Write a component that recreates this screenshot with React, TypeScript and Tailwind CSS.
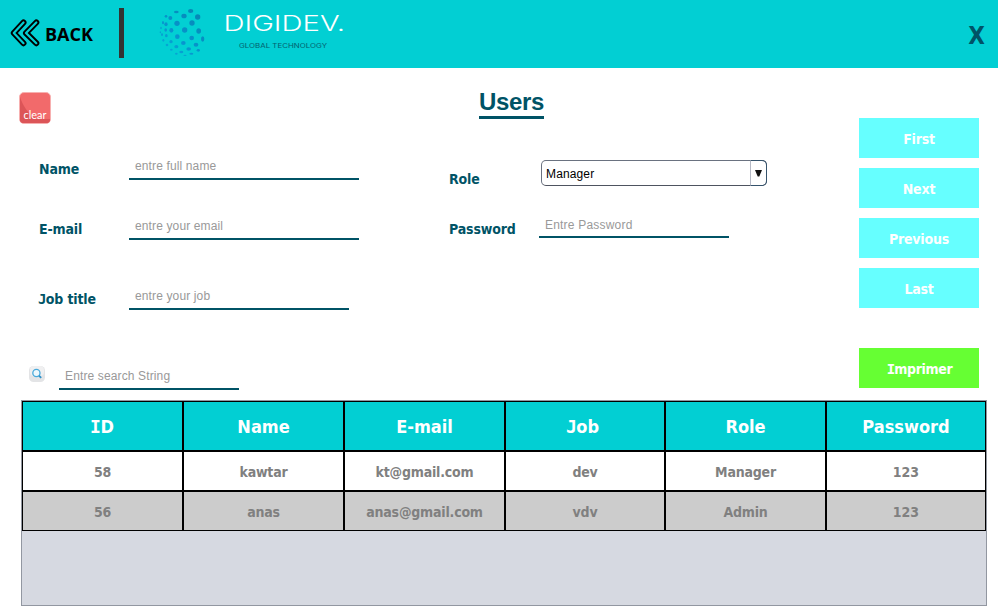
import React from "react";

const label = "font-['DejaVu_Sans_Condensed','DejaVu_Sans',sans-serif] font-bold text-[14px] leading-[20px] tracking-[-0.15px] text-[#005366] whitespace-nowrap";

const dots: number[][] = [
  [79, 36, 7, 4], [122, 33, 8, 6], [102, 48, 8, 7], [143, 51, 8, 8], [48, 49, 4, 4],
  [61, 54, 6, 6], [81, 70, 8, 8], [126, 69, 8, 8], [104, 90, 8, 8], [146, 93, 7, 8],
  [64, 91, 6, 7], [82, 110, 7, 7], [125, 114, 7, 7], [100, 129, 7, 6], [158, 117, 5, 8], [138, 134, 7, 6],
  [48, 73, 5, 6], [39, 68, 3, 5], [47, 90, 4, 5], [49, 107, 4, 5], [63, 125, 5, 5], [79, 140, 6, 5], [116, 147, 7, 5],
  [33, 84, 2, 4], [36, 104, 3, 4], [40, 121, 3, 4], [51, 135, 4, 4], [64, 149, 4, 3], [94, 156, 6, 4],
  [145, 151, 5, 4], [124, 161, 6, 3], [79, 161, 4, 3], [105, 166, 5, 2], [31, 97, 2, 3],
];

function Globe() {
  return (
    <svg className="shrink-0" width="50" height="60" viewBox="24 0 150 180">
      <defs>
        <linearGradient id="globe" gradientUnits="userSpaceOnUse" x1="40" y1="160" x2="150" y2="40">
          <stop offset="0" stopColor="#05b0d6" />
          <stop offset="0.4" stopColor="#0795cf" />
          <stop offset="1" stopColor="#0688b4" />
        </linearGradient>
      </defs>
      {dots.map(([x, y, rx, ry], i) => (
        <ellipse key={i} cx={x} cy={y} rx={rx} ry={ry} fill="url(#globe)" />
      ))}
    </svg>
  );
}

function Header() {
  return (
    <header className="flex h-[68px] bg-[#02cfd3]">
      <svg className="ml-[10px] mt-[18px] shrink-0" width="31" height="30" viewBox="0 0 31 30" fill="none" strokeLinejoin="round" strokeLinecap="round">
        <g stroke="#000" strokeWidth="6">
          <path d="M13.5 4.5 3.8 15l9.7 10.2" />
          <path d="M26.3 4.5 16 15l10.3 10.2" />
        </g>
        <g stroke="#02cfd3" strokeWidth="2.2">
          <path d="M13.5 4.5 3.8 15l9.7 10.2" />
          <path d="M26.3 4.5 16 15l10.3 10.2" />
        </g>
      </svg>
      <div className="ml-[4px] mt-[22px] w-[74px] font-['Open_Sans',sans-serif] text-[18px] font-bold leading-[25px] text-black">BACK</div>
      <div className="mt-[8px] h-[50px] w-[5px] bg-[#333]" />
      <div className="ml-[34px]"><Globe /></div>
      <svg className="ml-[12px] shrink-0" width="130" height="60" viewBox="0 0 130 60">
        <text x="3.5" y="31" fontFamily="Inter, sans-serif" fontSize="21" fontWeight="350" fill="#fff" textLength="121.5" lengthAdjust="spacingAndGlyphs">DIGIDEV.</text>
        <text x="19" y="48" fontFamily="Inter, sans-serif" fontSize="6" fill="#04606e" textLength="88" lengthAdjust="spacingAndGlyphs">GLOBAL TECHNOLOGY</text>
      </svg>
      <div className="ml-auto mr-[13px] mt-[21px] font-['DejaVu_Sans_Condensed','DejaVu_Sans',sans-serif] text-[24px] font-bold leading-[30px] text-[#005366]">X</div>
    </header>
  );
}

/* Sets a leading I or J in the slab form. */
function Slab({ text }: { text: string }) {
  if (!/^[IJ]/.test(text)) return <>{text}</>;
  return (
    <>
      <span className="-ml-[1px] -mr-[0.5px] font-['DejaVu_Sans_Mono',monospace]">{text[0]}</span>
      {text.slice(1)}
    </>
  );
}

function Field({ name, hint, width, gap }: { name: string; hint: string; width: string; gap: string }) {
  return (
    <div className={"flex h-[30px] " + gap}>
      <div className={label + " w-[90px] pt-[9px]"}><Slab text={name} /></div>
      <div className={"border-b-2 border-[#005366] pl-[6px] pt-[8px] font-['Liberation_Sans',sans-serif] text-[12px] leading-[16px] tracking-[0.13px] text-[#999] " + width}>{hint}</div>
    </div>
  );
}

const columns = ["ID", "Name", "E-mail", "Job", "Role", "Password"];
const rows = [
  ["58", "kawtar", "kt@gmail.com", "dev", "Manager", "123"],
  ["56", "anas", "anas@gmail.com", "vdv", "Admin", "123"],
];

export default function App() {
  return (
    <div className="h-[615px] w-[998px] overflow-hidden bg-white">
      <Header />
      <main className="flex h-[332px]">
        <section className="w-[430px] pl-[39px]">
          <svg className="-ml-[20px] mt-[24px] block" width="32" height="32" viewBox="0 0 32 32">
            <rect x="0.5" y="0.5" width="31" height="31" rx="4.5" fill="#f26a6b" stroke="#f7b0b0" />
            <path d="M1 5C4 14 9 22 18 27H31V28q0 3-3 3H4q-3 0-3-3Z" fill="#dc5558" />
            <text x="4.5" y="26.5" fontFamily="Lato, sans-serif" fontSize="11" fill="#fff" textLength="23" lengthAdjust="spacingAndGlyphs">clear</text>
          </svg>
          <Field name="Name" hint="entre full name" width="w-[230px]" gap="mt-[26px]" />
          <Field name="E-mail" hint="entre your email" width="w-[230px]" gap="mt-[30px]" />
          <Field name="Job title" hint="entre your job" width="w-[220px]" gap="mt-[40px]" />
          <div className="-ml-[10px] mt-[50px] flex h-[30px]">
            <svg className="mr-[14px] mt-[6px]" width="16" height="16" viewBox="0 0 16 16" fill="none">
              <rect width="16" height="16" rx="4.5" fill="#e3e4e6" />
              <rect x="1" width="14" height="10" rx="4" fill="#f0f0f1" />
              <circle cx="7.4" cy="7" r="3.6" fill="#eef8fd" stroke="#49aadb" strokeWidth="1.3" />
              <path d="m10 9.6 2.2 2.2" stroke="#2f91c9" strokeWidth="1.8" />
            </svg>
            <div className="w-[180px] border-b-2 border-[#005366] pl-[6px] pt-[8px] font-['Liberation_Sans',sans-serif] text-[12px] leading-[16px] tracking-[0.13px] text-[#999]">Entre search String</div>
          </div>
        </section>
        <section className="w-[429px] pl-[19px]">
          <h1 className="ml-[30px] mt-[20px] h-[31px] w-[65px] whitespace-nowrap border-b-[3px] border-[#005366] font-['Liberation_Sans',sans-serif] text-[24px] font-bold leading-[28px] tracking-[-0.35px] text-[#005366]">Users</h1>
          <div className="mt-[41px] flex h-[26px]">
            <div className={label + " w-[92px] pt-[9px]"}>Role</div>
            <div className="flex h-[26px] w-[226px] rounded-[5px] border border-[#6a7280] border-b-[#4e5360]">
              <div className="grow pl-[4px] font-['Liberation_Sans',sans-serif] text-[12px] leading-[26px] tracking-[0.13px] text-black">Manager</div>
              <div className="-my-px -mr-px w-[17px] rounded-r-[5px] border border-[#35536c] border-l-[#b5b9c5] pl-[4px] pt-[9px]">
                <svg width="7" height="7" viewBox="0 0 7 7"><path d="M0 0h7L4.3 6.5H2.7Z" fill="#111" /></svg>
              </div>
            </div>
          </div>
          <div className="mt-[20px] flex h-[32px]">
            <div className={label + " w-[90px] pt-[13px]"}>Password</div>
            <div className="w-[190px] border-b-2 border-[#005366] pl-[6px] pt-[11px] font-['Liberation_Sans',sans-serif] text-[12px] leading-[16px] tracking-[0.2px] text-[#999]">Entre Password</div>
          </div>
        </section>
        <nav className="mt-[50px] flex w-[120px] flex-col gap-[10px] font-['DejaVu_Sans_Condensed','DejaVu_Sans',sans-serif] text-[14px] font-bold leading-[42px] tracking-[-0.2px] text-white">
          {["First", "Next", "Previous", "Last"].map((t) => (
            <button key={t} className="h-[40px] bg-[#66ffff]">{t}</button>
          ))}
          <button className="mt-[30px] h-[40px] bg-[#66ff33] pl-[2px] tracking-[-0.35px]"><Slab text="Imprimer" /></button>
        </nav>
      </main>
      <section className="ml-[21px] h-[206px] w-[966px] border border-[#9297a1] bg-[#d6d9e1] text-center font-['DejaVu_Sans_Condensed','DejaVu_Sans',sans-serif] font-bold">
        <div className="grid h-[50px] grid-cols-[161px_161px_161px_160px_161px_160px] grid-rows-[50px] bg-[#02cfd3] text-[18px] leading-[49px] text-white">
          {columns.map((c) => (
            <div key={c} className={c === "Job" ? "border border-black pr-[4px]" : "border border-black"}><Slab text={c} /></div>
          ))}
        </div>
        {rows.map((r, i) => (
          <div key={i} className={"grid h-[40px] grid-cols-[161px_161px_161px_160px_161px_160px] grid-rows-[40px] text-[14px] leading-[40px] tracking-[-0.2px] text-[#808080] " + (i ? "bg-[#ccc]" : "bg-white")}>
            {r.map((c, j) => (
              <div key={j} className={j === 5 ? "border border-black tracking-normal" : "border border-black"}>{c}</div>
            ))}
          </div>
        ))}
      </section>
    </div>
  );
}
